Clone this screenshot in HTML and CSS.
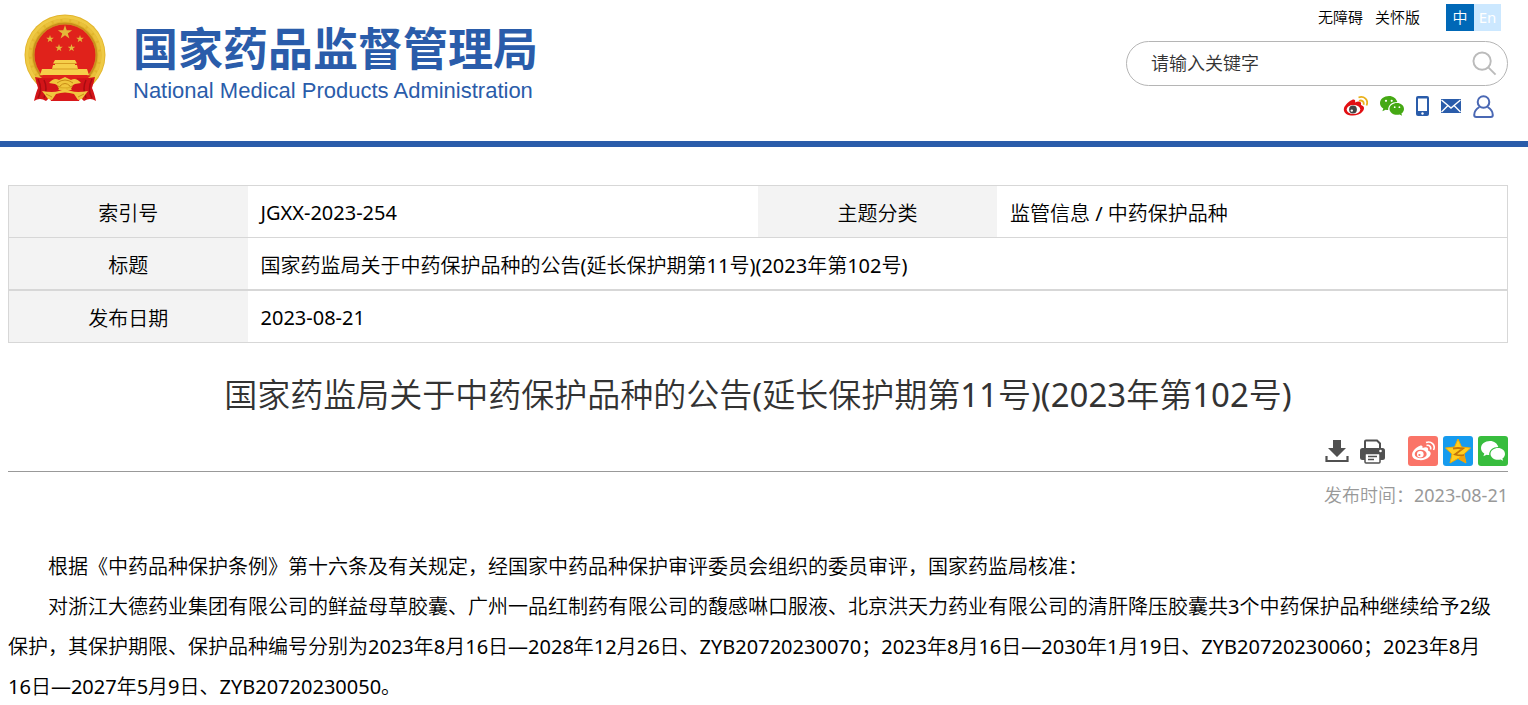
FILE: index.html
```html
<!DOCTYPE html>
<html lang="zh-CN">
<head>
  <meta charset="UTF-8" />
  <title>国家药监局关于中药保护品种的公告</title>
  <link rel="stylesheet" href="styles.css">
</head>
<body>
  <!-- shared shapes -->
  <svg class="defs" width="0" height="0" aria-hidden="true">
    <symbol id="star" viewBox="-10 -10 20 20">
      <path d="M0-10 2.3-3.1 9.5-3.1 3.7 1.2 5.9 8.1 0 3.8-5.9 8.1-3.7 1.2-9.5-3.1-2.3-3.1z"/>
    </symbol>
    <symbol id="wechat" viewBox="0 0 24 20">
      <path d="M9 0C4 0 0 3.100 0 7.100c0 2.300 1.300 4.200 3.300 5.500l-.9 2.700 3.200-1.600c1 .3 1.700.4 2.600.4C7.800 9.500 11.800 6 17.300 6 16.500 2.600 13 0 9 0z"/>
      <path d="M24 12.900c0-3.300-3.200-5.900-7-5.900s-7.500 2.600-7.500 5.900 3.700 5.900 7.500 5.900c.9 0 1.800-.2 2.600-.4l2.500 1.400-.7-2.300C23 16.400 24 14.800 24 12.900z"/>
      <g class="eye">
        <circle cx="6" cy="4.800" r="1.100"/><circle cx="11.700" cy="4.800" r="1.100"/>
        <circle cx="14.700" cy="11.200" r=".9"/><circle cx="19.400" cy="11.200" r=".9"/>
      </g>
    </symbol>
  </svg>

  <header class="header">
    <a class="logo" href="#">
      <svg class="emblem" viewBox="0 0 82 90" aria-hidden="true">
        <circle cx="41" cy="41" r="40.500" fill="#e2b52c"/>
        <circle cx="41" cy="41" r="38" fill="none" stroke="#efca45" stroke-width="3"/>
        <circle cx="41" cy="41" r="35" fill="none" stroke="#e9c03a" stroke-width="3" stroke-dasharray="7 2"/>
        <circle cx="41" cy="41" r="31.500" fill="none" stroke="#c98f1d" stroke-width="2"/>
        <circle cx="41" cy="41" r="30.500" fill="#e0221b"/>
        <g fill="#e3b83a">
          <use href="#star" x="33.500" y="11" width="15" height="15"/>
          <use href="#star" x="22" y="21" width="8" height="8"/>
          <use href="#star" x="52" y="21" width="8" height="8"/>
          <use href="#star" x="31" y="30" width="8" height="8"/>
          <use href="#star" x="43.500" y="30" width="8" height="8"/>
        </g>
        <!-- gate and base -->
        <path d="M31 46h20l2 3.500H29zM31 49h20v2H31zM29 51h24l1 4h9l2 6H16l2-6h10z" fill="#f6cf4a"/>
        <path d="M30 49.500h22M28 55h26" stroke="#d79d22"/>
        <path d="M15 61.500h52l-5 4H20z" fill="#e0221b"/>
        <!-- drapery -->
        <path d="M11 63Q20 65 29 64L35 75 22 87Q16 83 10 87Q12 78 14 74Q12 68 11 63zM71 63Q62 65 53 64L47 75 60 87Q66 83 72 87Q70 78 68 74Q70 68 71 63z" fill="#d31418"/>
        <path d="M14 65Q19 75 14 84M20 66Q24 74 20 84M68 65Q63 75 68 84M62 66Q58 74 62 84" stroke="#a80c12" stroke-width="1.500" fill="none"/>
        <path d="M23 76h36l-4 11H27z" fill="#d8181a"/>
        <path d="M25 69Q30 63 35 66L41 63 47 66Q52 63 57 69L51 70 47 72Q41 75 35 72L31 70z" fill="#f0c53c"/>
        <path d="M33 69Q41 63 49 69M36 72Q41 67 46 72" stroke="#c98c16" fill="none"/>
        <path d="M18 77Q29 79 35 77L41 75 47 77Q53 79 64 77L58 85 54 86 50 80Q41 77 32 80L28 86 24 85z" fill="#f1c63f"/>
        <path d="M22 80l6 3M60 80l-6 3" stroke="#cb9118"/>
      </svg>
      <span class="logo-text">
        <strong class="logo-cn">国家药品监督管理局</strong>
        <span class="logo-en">National Medical Products Administration</span>
      </span>
    </a>

    <div class="tools">
      <nav class="top-links">
        <a href="#">无障碍</a>
        <a href="#">关怀版</a>
        <span class="lang">
          <a class="current" href="#">中</a>
          <a href="#">En</a>
        </span>
      </nav>
      <form class="search">
        <input type="text" placeholder="请输入关键字" aria-label="请输入关键字">
        <button type="button" aria-label="搜索">
          <svg width="25" height="25" viewBox="0 0 26 26" fill="none" stroke="#bbb" stroke-width="2">
            <circle cx="10.500" cy="10.500" r="9"/><path d="M17 17l7.500 7.500"/>
          </svg>
        </button>
      </form>
      <nav class="social">
        <a href="#" aria-label="微博">
          <svg width="25" height="20" viewBox="0 0 25 20">
            <path d="M9 4C11 3 13 4 12 6.500 15 5 19 5 18 9 21 10 22 12 20 15 17 19 12 20 8 19.500 3 19 0 16 1 12 2 9 6 5 9 4z" fill="#e20f13"/>
            <ellipse cx="10.500" cy="13.500" rx="6.800" ry="4.500" fill="#fff"/>
            <circle cx="10" cy="13.500" r="3.900" fill="#444"/>
            <circle cx="8.800" cy="14.600" r="1.200" fill="#fff"/>
            <path d="M15.500 1.500C21-.5 26 4 23.500 9.500M16 4.800c3-1 5.500 1 4.500 4" fill="none" stroke="#eab11c" stroke-width="1.800"/>
          </svg>
        </a>
        <a class="wechat-green" href="#" aria-label="微信"><svg width="24" height="20"><use href="#wechat"/></svg></a>
        <a href="#" aria-label="手机版">
          <svg width="13" height="20" viewBox="0 0 13 20">
            <rect width="13" height="20" rx="2" fill="#2a5caa"/><path d="M2 2.500h9v12.500H2z" fill="#fff"/><circle cx="6.500" cy="17.500" r="1.200" fill="#fff"/>
          </svg>
        </a>
        <a href="#" aria-label="邮箱">
          <svg width="20" height="14" viewBox="0 0 20 14">
            <path d="M0 0h20v14H0z" fill="#2a5caa"/><path d="M.500 1 10 9 19.500 1M.500 13l6.500-6.500M19.500 13 13 6.500" fill="none" stroke="#fff" stroke-width="1.400"/>
          </svg>
        </a>
        <a href="#" aria-label="个人中心">
          <svg width="21" height="23" viewBox="0 0 21 23" fill="none" stroke="#4a68b4" stroke-width="2">
            <circle cx="10.500" cy="7" r="5.800"/><path d="M6.500 12C3 14 1.200 17 1.200 20q0 2 2 2h14.600q2 0 2-2c0-3-1.800-6-5.300-8"/>
          </svg>
        </a>
      </nav>
    </div>
  </header>

  <main class="content">
    <table class="info">
      <tr>
        <th>索引号</th><td>JGXX-2023-254</td>
        <th>主题分类</th><td>监管信息 / 中药保护品种</td>
      </tr>
      <tr>
        <th>标题</th><td colspan="3">国家药监局关于中药保护品种的公告(延长保护期第11号)(2023年第102号)</td>
      </tr>
      <tr class="thick">
        <th>发布日期</th><td colspan="3">2023-08-21</td>
      </tr>
    </table>

    <h1>国家药监局关于中药保护品种的公告(延长保护期第11号)(2023年第102号)</h1>

    <div class="actions">
      <button type="button" aria-label="下载">
        <svg width="24" height="24" viewBox="0 0 24 24" fill="#505050">
          <path d="M8 1h8v8h5L12 18 3 9h5z"/><path d="M1.500 17v5h21v-5" fill="none" stroke="#505050" stroke-width="2.200"/>
        </svg>
      </button>
      <button type="button" aria-label="打印">
        <svg width="25" height="25" viewBox="0 0 25 25">
          <path d="M5 10V2.500Q5 1.500 6 1.500h11l3 3V10" fill="#fff" stroke="#505050" stroke-width="2"/>
          <rect y="9" width="25" height="12" rx="2.500" fill="#505050"/>
          <circle cx="20.500" cy="12" r="1.300" fill="#fff"/>
          <rect x="5" y="14.500" width="15" height="9.500" rx="1" fill="#fff" stroke="#505050" stroke-width="1.500"/>
          <path d="M8 17.500h9M8 20.500h6" stroke="#505050" stroke-width="1.500"/>
        </svg>
      </button>
      <div class="share">
        <a class="share-weibo" href="#" aria-label="分享到微博">
          <svg width="24" height="20" viewBox="0 0 24 20">
            <path d="M8.500 5C11 4 12 5 11.500 7 15 5.500 18 6 17 9.500 20 10.500 20.500 13 18.500 15.500 15.500 19 11 19.500 7.500 19 3 18.500.500 16 1.200 12.500 2 9.500 5.500 6 8.500 5z" fill="#fff"/>
            <ellipse cx="9.700" cy="13" rx="6" ry="4.300" fill="#fa7468"/>
            <circle cx="9.300" cy="13.300" r="3.300" fill="#fff"/><circle cx="8.400" cy="14" r="1.100" fill="#fa7468"/>
            <path d="M15 1.500C20-.5 25 4 22.500 9M15.500 4.500c2.500-.8 5 1 4 4" fill="none" stroke="#fff" stroke-width="1.600"/>
          </svg>
        </a>
        <a class="share-qzone" href="#" aria-label="分享到QQ空间">
          <svg width="28" height="28" viewBox="0 0 28 28">
            <path d="M14 2 17.500 10 26.500 11 20 17 22 26 14 21.500 6 26 8 17 1.500 11 10.500 10z" fill="#ffce1f" stroke="#f0ab08" stroke-linejoin="round"/>
            <path d="M14 21.500 22 26 20 17 17 19z" fill="#f0a30c"/>
            <path d="M9 11.500q5-1 10 0l-8 6q5 1.500 9 .500" fill="none" stroke="#c47608" stroke-width="1.800"/>
          </svg>
        </a>
        <a class="share-wechat" href="#" aria-label="分享到微信"><svg width="24" height="20"><use href="#wechat"/></svg></a>
      </div>
    </div>
    <p class="date">发布时间：2023-08-21</p>

    <article class="article">
      <p>根据《中药品种保护条例》第十六条及有关规定，经国家中药品种保护审评委员会组织的委员审评，国家药监局核准：</p>
      <p>对浙江大德药业集团有限公司的鲜益母草胶囊、广州一品红制药有限公司的馥感啉口服液、北京洪天力药业有限公司的清肝降压胶囊共3个中药保护品种继续给予2级保护，其保护期限、保护品种编号分别为2023年8月16日—2028年12月26日、ZYB20720230070；2023年8月16日—2030年1月19日、ZYB20720230060；2023年8月<br>16日—2027年5月9日、ZYB20720230050。</p>
    </article>
  </main>
</body>
</html>
```

FILE: styles.css
```css
* {
  box-sizing: border-box;
}

body {
  margin: 0;
  background: #fff;
  color: #000;
  font-family: "Noto Sans", "Noto Sans CJK SC DemiLight", "Noto Sans CJK SC", sans-serif;
  font-size: 20px;
}

a {
  color: inherit;
  text-decoration: none;
}

button {
  padding: 0;
  border: 0;
  background: none;
  cursor: pointer;
}

svg {
  display: block;
}

.defs {
  position: absolute;
}

.header {
  display: flex;
  justify-content: space-between;
  height: 147px;
  padding: 0 20px 0 24px;
  border-bottom: 6px solid #2a5caa;
}

.logo {
  display: flex;
  gap: 27px;
  padding-top: 14px;
  color: #2a5caa;
}

.emblem {
  width: 82px;
  height: 90px;
}

.logo-text {
  display: flex;
  flex-direction: column;
}

.logo-cn {
  font-family: "Noto Sans CJK SC", sans-serif;
  font-size: 45px;
  font-weight: 700;
  line-height: 65px;
}

.logo-en {
  font-family: "Liberation Sans", sans-serif;
  font-size: 22px;
  line-height: 24px;
}

.tools {
  display: flex;
  flex-direction: column;
  width: 382px;
  padding-top: 4px;
}

.top-links {
  display: flex;
  justify-content: flex-end;
  gap: 12px;
  padding-right: 7px;
  font-size: 15px;
  line-height: 26px;
}

.lang {
  display: flex;
  margin-left: 14px;
  color: #fff;
  text-align: center;
}

.lang a {
  width: 27px;
  height: 27px;
  background: #cce8ff;
}

.lang .current {
  width: 28px;
  background: #0068b7;
}

.search {
  display: flex;
  align-items: center;
  height: 45px;
  margin-top: 10px;
  padding: 0 10px 0 24px;
  border: 1px solid #b5b5b5;
  border-radius: 23px;
}

.search input {
  flex: 1;
  min-width: 0;
  padding: 0 0 2px;
  border: 0;
  outline: 0;
  background: none;
  font: inherit;
  font-size: 18px;
}

.search input::placeholder {
  color: #333;
}

.social {
  display: flex;
  align-items: center;
  justify-content: flex-end;
  gap: 12px;
  height: 40px;
  padding-right: 14px;
}

.wechat-green {
  fill: #45a914;
}

.eye {
  fill: #fff;
}

.content {
  padding: 38px 20px 0 8px;
}

.info {
  width: 100%;
  border: 1px solid #d7d7d7;
  border-collapse: collapse;
  table-layout: fixed;
}

.info tr {
  height: 52px;
  border-top: 1px solid #d7d7d7;
}

.info .thick {
  height: 53px;
  border-top-width: 2px;
}

.info th {
  width: 239px;
  padding: 2px 0 0;
  background: #f3f3f3;
  font-weight: 400;
}

.info td {
  padding: 2px 13px 0;
}

h1 {
  margin: 28px 0 0;
  color: #333;
  font-size: 33px;
  font-weight: 400;
  line-height: 48px;
  text-align: center;
}

.actions {
  display: flex;
  align-items: center;
  justify-content: flex-end;
  gap: 11px;
  margin-top: 17px;
  padding-bottom: 5px;
  border-bottom: 1px solid #999;
}

.share {
  display: flex;
  gap: 5px;
  margin-left: 12px;
}

.share a {
  display: flex;
  align-items: center;
  justify-content: center;
  width: 30px;
  height: 30px;
  border-radius: 3px;
}

.share-weibo {
  background: #fa7468;
}

.share-qzone {
  background: #169bee;
}

.share-wechat {
  background: #38bd3e;
  fill: #fff;
}

.share-wechat .eye {
  fill: #38bd3e;
}

.date {
  margin: 10px 0 0;
  color: #999;
  font-size: 18px;
  line-height: 26px;
  text-align: right;
}

.article {
  margin-top: 39px;
  line-height: 40px;
}

.article p {
  margin: 0;
  text-indent: 2em;
}
```
